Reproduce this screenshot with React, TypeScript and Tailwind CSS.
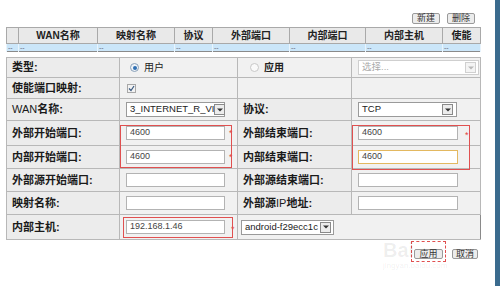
import React from "react";

const F = { fontFamily: '"Liberation Sans", "Noto Sans CJK SC", sans-serif' };

function Arrow({ disabled }: { disabled?: boolean }) {
  return (
    <span className={`flex h-[11px] w-[11px] items-center justify-center border ${disabled ? "border-[#d0d0d0] bg-[#f4f4f4]" : "border-[#8a8a8a] bg-[#ececec]"}`}>
      <svg width="6" height="4" viewBox="0 0 6 4">
        <path d="M0 0.5 L6 0.5 L3 3.5 Z" fill={disabled ? "#b8b8b8" : "#333"} />
      </svg>
    </span>
  );
}

function Input({ value, w = 99, focus }: { value?: string; w?: number; focus?: boolean }) {
  return (
    <div
      className={`flex h-[14px] items-center bg-white px-[3px] text-[9px] text-[#444] ${focus ? "border border-[#e3b860]" : "border border-[#b3b3b3]"}`}
      style={{ width: w }}
    >
      {value}
    </div>
  );
}

function Select({ value, w, arrowGap, disabled }: { value: string; w: number; arrowGap?: number; disabled?: boolean }) {
  return (
    <div
      className={`flex h-[15px] items-center justify-between border bg-white pl-[3px] pr-[2px] text-[9.5px] ${disabled ? "border-[#cfcfcf] text-[#aaa]" : "border-[#9a9a9a] text-[#222]"}`}
      style={{ width: w }}
    >
      <span className="whitespace-nowrap">{value}</span>
      <span className="shrink-0" style={{ marginRight: arrowGap ?? 0 }}>
        <Arrow disabled={disabled} />
      </span>
    </div>
  );
}

function Star() {
  return <span className="ml-[4px] text-[9px] leading-none text-[#e04040]">*</span>;
}

const lbl = "border border-[#b8b8b8] bg-[#ececec] pl-[5px] text-[11px] font-bold text-[#1a1a1a] whitespace-nowrap";
const val = "border border-[#b8b8b8] bg-[#f1f1f1] pl-[6px]";

export default function App() {
  return (
    <div className="relative flex h-[286px] w-[500px] overflow-hidden bg-white" style={F}>
      <div className="flex-1 pl-[6px] pt-[13px]">
        <div className="flex w-[474px] justify-end gap-[7px] pr-[5px]">
          <button className="h-[11px] w-[28px] rounded-[2px] border border-[#9a9a9a] bg-[#ececec] text-[9px] leading-none text-[#333]">新建</button>
          <button className="h-[11px] w-[28px] rounded-[2px] border border-[#9a9a9a] bg-[#ececec] text-[9px] leading-none text-[#333]">删除</button>
        </div>
        <table className="mt-[3px] w-[474px] table-fixed border-collapse border border-[#8a8a8a] text-[10px]">
          <colgroup>
            <col style={{ width: 12 }} />
            <col style={{ width: 79 }} />
            <col style={{ width: 77 }} />
            <col style={{ width: 38 }} />
            <col style={{ width: 77 }} />
            <col style={{ width: 76 }} />
            <col style={{ width: 77 }} />
            <col style={{ width: 38 }} />
          </colgroup>
          <tbody>
            <tr className="h-[16px] bg-[#e9e9e9] font-bold text-[#222]">
              <td className="border border-[#a9a9a9]"></td>
              {["WAN名称", "映射名称", "协议", "外部端口", "内部端口", "内部主机", "使能"].map((t) => (
                <td key={t} className="border border-[#a9a9a9] text-center leading-none">{t}</td>
              ))}
            </tr>
            <tr className="h-[7px] bg-[#cbe6f9] text-[7px] leading-none text-[#667]">
              {Array.from({ length: 8 }).map((_, i) => (
                <td key={i} className="border-x border-[#e8f4fd] pl-[1px] align-top">--</td>
              ))}
            </tr>
          </tbody>
        </table>

        <table className="mt-[5px] w-[474px] table-fixed border-collapse border border-[#8a8a8a]">
          <colgroup>
            <col style={{ width: 113 }} />
            <col style={{ width: 118 }} />
            <col style={{ width: 114 }} />
            <col style={{ width: 129 }} />
          </colgroup>
          <tbody>
            <tr className="h-[20px]">
              <td className={lbl}>类型:</td>
              <td className={val}>
                <div className="flex items-center gap-[5px] pl-[4px] text-[10px] text-[#222]">
                  <span className="flex h-[9px] w-[9px] items-center justify-center rounded-full border border-[#8aa0b8] bg-[#eef3f8]">
                    <span className="h-[4px] w-[4px] rounded-full bg-[#2f6fb3]" />
                  </span>
                  用户
                </div>
              </td>
              <td className={val + " pl-[5px]"}>
                <div className="flex items-center gap-[5px] pl-[6px] text-[10px] font-bold text-[#222]">
                  <span className="h-[9px] w-[9px] rounded-full border border-[#c8c8c8] bg-[#fafafa]" />
                  应用
                </div>
              </td>
              <td className={val}>
                <Select value="选择..." w={121} disabled />
              </td>
            </tr>
            <tr className="h-[21px]">
              <td className={lbl}>使能端口映射:</td>
              <td className={val}>
                <span className="ml-[1px] flex h-[9px] w-[9px] items-center justify-center border border-[#a8a8a8] bg-[#f2f2f2]">
                  <svg width="7" height="7" viewBox="0 0 7 7">
                    <path d="M1 3.5 L3 5.5 L6 1" stroke="#3b5a80" strokeWidth="1.2" fill="none" />
                  </svg>
                </span>
              </td>
              <td className={val}></td>
              <td className={val}></td>
            </tr>
            <tr className="h-[22px]">
              <td className={lbl + " font-normal"}>WAN<b>名称:</b></td>
              <td className={val + " pl-[4px]"}>
                <Select value="3_INTERNET_R_VI" w={99} />
              </td>
              <td className={lbl}>协议:</td>
              <td className={val}>
                <Select value="TCP" w={99} arrowGap={1} />
              </td>
            </tr>
            <tr className="h-[24px]">
              <td className={lbl}>外部开始端口:</td>
              <td className={val}>
                <div className="flex items-center"><Input value="4600" /><Star /></div>
              </td>
              <td className={lbl}>外部结束端口:</td>
              <td className={val}>
                <div className="flex items-center"><Input value="4600" w={100} /><span className="ml-[3px]"><Star /></span></div>
              </td>
            </tr>
            <tr className="h-[23px]">
              <td className={lbl}>内部开始端口:</td>
              <td className={val}>
                <div className="flex items-center"><Input value="4600" /><Star /></div>
              </td>
              <td className={lbl}>内部结束端口:</td>
              <td className={val}>
                <Input value="4600" w={100} focus />
              </td>
            </tr>
            <tr className="h-[23px]">
              <td className={lbl}>外部源开始端口:</td>
              <td className={val}><Input /></td>
              <td className={lbl}>外部源结束端口:</td>
              <td className={val}><Input w={100} /></td>
            </tr>
            <tr className="h-[23px]">
              <td className={lbl}>映射名称:</td>
              <td className={val}><Input /></td>
              <td className={lbl + " font-normal"}><b>外部源</b>IP<b>地址:</b></td>
              <td className={val}><Input w={100} /></td>
            </tr>
            <tr className="h-[23px]">
              <td className={lbl}>内部主机:</td>
              <td className={val + " pl-[4px]"}>
                <div className="flex items-center"><Input value="192.168.1.46" /><span className="ml-[2px]"><Star /></span></div>
              </td>
              <td className="border-y border-[#b8b8b8] bg-[#f1f1f1] pl-[3px]" colSpan={2}>
                <Select value="android-f29ecc1c" w={93} />
              </td>
            </tr>
          </tbody>
        </table>

        <div className="mt-[9px] flex w-[474px] justify-end gap-[9px] pr-[2px]">
          <button className="h-[10px] w-[29px] rounded-[2px] border border-[#9a9a9a] bg-[#ececec] text-[9px] leading-none text-[#333]">应用</button>
          <button className="h-[10px] w-[26px] rounded-[2px] border border-[#9a9a9a] bg-[#ececec] text-[9px] leading-none text-[#333]">取消</button>
        </div>
      </div>
      <div className="w-[5px] bg-[#3b6b8e]" />

      {/* annotation overlays */}
      <div className="pointer-events-none absolute left-[120px] top-[125px] h-[43px] w-[112px] border border-[#e05050]" />
      <div className="pointer-events-none absolute left-[352px] top-[125px] h-[45px] w-[118px] border border-[#e05050]" />
      <div className="pointer-events-none absolute left-[123px] top-[217px] h-[21px] w-[110px] border border-[#e05050]" />
      <div className="pointer-events-none absolute left-[411px] top-[241px] h-[21px] w-[35px] border border-dashed border-[#e05050]" />
      <div className="pointer-events-none absolute left-[383px] top-[240px] text-[20px] font-bold leading-none text-[#000]/[0.07]">Bai</div>
      <div className="pointer-events-none absolute left-[383px] top-[262px] text-[8px] leading-none text-[#000]/[0.08]">jingyan.baidu.com</div>
    </div>
  );
}
